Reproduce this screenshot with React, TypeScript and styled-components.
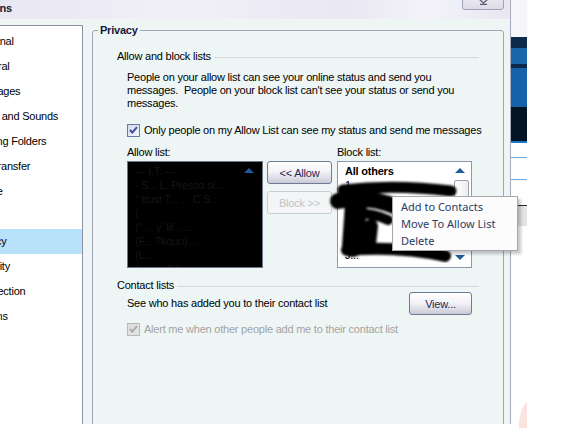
import React from 'react';
import styled, { createGlobalStyle } from 'styled-components';

const palette = {
  body: '#eef6f5',
  title: '#eae9f4',
  frame: '#a9a8bd',
  group: '#a4a4b6',
  rule: '#d4d9dc',
  select: '#b8e2f9',
  text: '#000000',
  disabled: '#a3a3a3',
  navy: '#1e2852',
  menuText: '#2c3b64',
  arrow: '#1f5c9c',
};

const GlobalStyle = createGlobalStyle`
  html, body {
    margin: 0;
    padding: 0;
    background: #ffffff;
  }
  body {
    font-family: "Liberation Sans", Arial, sans-serif;
    font-size: 11px;
    letter-spacing: -0.22px;
    color: ${palette.text};
  }
`;

const Screen = styled.div`
  position: relative;
  width: 566px;
  height: 428px;
  overflow: hidden;
  display: flex;
  align-items: flex-start;
  background: #ffffff;
`;

const Window = styled.div`
  flex-shrink: 0;
  box-sizing: border-box;
  margin-left: -40px;
  width: 551px;
  height: 424px;
  display: flex;
  flex-direction: column;
  overflow: hidden;
  background: ${palette.body};
  border-right: 1px solid ${palette.frame};
`;

const TitleBar = styled.div`
  height: 19px;
  flex-shrink: 0;
  display: flex;
  justify-content: space-between;
  align-items: flex-start;
  padding-left: 12px;
  background: linear-gradient(90deg, #e6e5f1 0%, #f1f0f8 40%, #e9e8f3 70%, #f3f3f9 85%, #e8e7f2 100%);
`;

const TitleText = styled.span`
  padding-top: 2px;
  line-height: 13px;
  font-weight: bold;
  color: #1a1a30;
`;

const CloseButton = styled.div`
  box-sizing: border-box;
  width: 42px;
  height: 22px;
  margin-top: -12px;
  margin-right: 6px;
  display: flex;
  align-items: flex-end;
  justify-content: center;
  padding-bottom: 4px;
  border: 1px solid #a3a3b7;
  border-radius: 3px;
  background: linear-gradient(#f7f7fb, #dcdbe8);
`;

const Body = styled.div`
  flex: 1;
  display: flex;
  align-items: flex-start;
  gap: 9px;
  padding: 6px 6px 0 6px;
  overflow: hidden;
`;

const Sidebar = styled.ul`
  box-sizing: border-box;
  flex-shrink: 0;
  width: 117px;
  height: 420px;
  margin: 0;
  padding: 3px 0 0 0;
  list-style: none;
  background: #ffffff;
  border: 1px solid #8f8fa2;
  overflow: hidden;
`;

const NavItem = styled.li<{ $selected?: boolean }>`
  height: 25px;
  line-height: 25px;
  padding-left: 5px;
  white-space: nowrap;
  background: ${(p) => (p.$selected ? palette.select : 'transparent')};
`;

const Group = styled.fieldset`
  box-sizing: border-box;
  flex-shrink: 0;
  width: 412px;
  height: 420px;
  margin: -1px 0 0 0;
  padding: 0 24px 0 24px;
  min-width: 0;
  border: 1px solid ${palette.group};
  border-radius: 3px;
`;

const Legend = styled.legend`
  margin-left: -19px;
  padding: 0 2px;
  line-height: 13px;
  font-weight: bold;
  color: #16163a;
`;

const SectionHeader = styled.div<{ $top: number }>`
  display: flex;
  align-items: center;
  gap: 3px;
  margin-top: ${(p) => p.$top}px;
  line-height: 13px;
  white-space: nowrap;
  &::after {
    content: '';
    flex: 1;
    height: 1px;
    margin-top: 1px;
    background: ${palette.rule};
  }
`;

const SectionBody = styled.div`
  padding: 0 7px 0 10px;
`;

const Paragraph = styled.p`
  margin: 8px 0 0 0;
  line-height: 13px;
  white-space: pre;
`;

const CheckRow = styled.label<{ $top: number; $disabled?: boolean }>`
  display: flex;
  align-items: center;
  gap: 4px;
  height: 13px;
  margin-top: ${(p) => p.$top}px;
  line-height: 13px;
  white-space: nowrap;
  color: ${(p) => (p.$disabled ? palette.disabled : palette.text)};
  svg {
    flex-shrink: 0;
  }
`;

const ListsRow = styled.div`
  display: flex;
  align-items: flex-start;
  margin-top: 9px;
`;

const ListColumn = styled.div`
  display: flex;
  flex-direction: column;
  gap: 2px;
  line-height: 13px;
`;

const ListBox = styled.div<{ $dark?: boolean; $width: number }>`
  position: relative;
  box-sizing: border-box;
  width: ${(p) => p.$width}px;
  height: 107px;
  padding: 2px 0 0 7px;
  overflow: hidden;
  background: ${(p) => (p.$dark ? '#000000' : '#ffffff')};
  border: 1px solid ${(p) => (p.$dark ? '#6f7688' : '#8d97ad')};
`;

const ListLine = styled.div<{ $bold?: boolean; $dim?: boolean }>`
  height: 14px;
  line-height: 14px;
  white-space: nowrap;
  font-weight: ${(p) => (p.$bold ? 'bold' : 'normal')};
  color: ${(p) => (p.$dim ? '#151515' : '#000000')};
`;

const ScrollArrow = styled.div<{ $down?: boolean; $dark?: boolean }>`
  position: absolute;
  right: ${(p) => (p.$dark ? 8 : 6)}px;
  ${(p) => (p.$down ? 'bottom: 7px;' : 'top: 6px;')}
  width: 0;
  height: 0;
  border-left: 5px solid transparent;
  border-right: 5px solid transparent;
  ${(p) => (p.$down ? `border-top: 5px solid ${palette.arrow};` : `border-bottom: 5px solid ${palette.arrow};`)}
`;

const ScrollThumb = styled.div`
  position: absolute;
  right: 2px;
  top: 18px;
  width: 15px;
  height: 24px;
  box-sizing: border-box;
  border: 1px solid #9aa0ae;
  border-radius: 2px;
  background: linear-gradient(90deg, #ffffff, #ececf0);
`;

const ButtonColumn = styled.div`
  display: flex;
  flex-direction: column;
  gap: 7px;
  margin: 15px 5px 0 4px;
`;

const Button = styled.button<{ $width: number }>`
  box-sizing: border-box;
  width: ${(p) => p.$width}px;
  height: 23px;
  padding: 0;
  font-family: "Liberation Sans", Arial, sans-serif;
  font-size: 11px;
  letter-spacing: -0.22px;
  color: ${palette.navy};
  border: 1px solid #6f7a99;
  border-radius: 3px;
  background: linear-gradient(#ffffff 0%, #f4f4f8 45%, #d9dae3 80%, #c8c9d4 100%);
  &:disabled {
    color: #c2c4cb;
    border-color: #cbcdd4;
    background: #f4f5f7;
  }
`;

const ContactRow = styled.div`
  display: flex;
  justify-content: space-between;
  align-items: center;
  height: 23px;
  line-height: 13px;
`;

const ContactText = styled.span`
  padding-bottom: 1px;
`;

const ContextMenu = styled.ul`
  position: absolute;
  left: 392px;
  top: 196px;
  box-sizing: border-box;
  width: 126px;
  margin: 0;
  padding: 1px 0;
  list-style: none;
  background: #fcfcfd;
  border: 1px solid #a7a7ab;
  box-shadow: 3px 3px 3px rgba(0, 0, 0, 0.22);
`;

const MenuItem = styled.li`
  height: 17px;
  line-height: 17px;
  padding-left: 8px;
  font-family: "Noto Sans", "Open Sans", sans-serif;
  font-size: 11px;
  letter-spacing: 0;
  color: ${palette.menuText};
  white-space: nowrap;
`;

const Backdrop = styled.svg`
  flex-shrink: 0;
  display: block;
`;

const Scribble = styled.svg`
  position: absolute;
  left: 0;
  top: 0;
  pointer-events: none;
`;

const CheckBox = ({ disabled }: { disabled?: boolean }) => (
  <svg width="13" height="13" viewBox="0 0 13 13">
    <defs>
      <linearGradient id={disabled ? 'cbd' : 'cb'} x1="0" y1="0" x2="1" y2="1">
        <stop offset="0" stopColor={disabled ? '#dcdcdc' : '#d3d8ea'} />
        <stop offset="1" stopColor={disabled ? '#e6e6e6' : '#f7f8fc'} />
      </linearGradient>
    </defs>
    <rect x="0.5" y="0.5" width="12" height="12" fill={`url(#${disabled ? 'cbd' : 'cb'})`} stroke={disabled ? '#b9b9b9' : '#6a7aa8'} />
    <path d="M3 6 L5.3 8.6 L10 3.2" fill="none" stroke={disabled ? '#a9a9a9' : '#3a4c9c'} strokeWidth="2" />
  </svg>
);

const navItems = [
  'Personal',
  'General',
  'Messages',
  'Alerts and Sounds',
  'Sharing Folders',
  'File Transfer',
  'Phone',
  'Tabs',
  'Privacy',
  'Security',
  'Connection',
  'Add-ins',
];

const allowed = [
  '--- I.T. --- ',
  '- S...  L.  Presso sl...',
  '" trust T... . . C S...',
  '(',
  '(" ...  y\' lil...  ...',
  '(F... ?kquo) ...',
  '(L...',
  '(... ... ..BS... . ...',
];

const blocked = ['1.', 'G...  ..', 'B...', 'C...  ...', 'N...', 'J...', 'g... ... ...'];

export default function App() {
  return (
    <>
      <GlobalStyle />
      <Screen>
        <Window>
          <TitleBar>
            <TitleText>Options</TitleText>
            <CloseButton>
              <svg width="11" height="6" viewBox="0 0 11 6">
                <path d="M1 0 L5.5 4 L10 0 M2 5.5 L9 5.5" fill="none" stroke="#5a5a70" strokeWidth="1.3" />
              </svg>
            </CloseButton>
          </TitleBar>
          <Body>
            <Sidebar>
              {navItems.map((item) => (
                <NavItem key={item} $selected={item === 'Privacy'}>
                  {item}
                </NavItem>
              ))}
            </Sidebar>
            <Group>
              <Legend>Privacy</Legend>
              <SectionHeader $top={13}>Allow and block lists</SectionHeader>
              <SectionBody>
                <Paragraph>
                  {'People on your allow list can see your online status and send you\nmessages.  People on your block list can\'t see your status or send you\nmessages.'}
                </Paragraph>
                <CheckRow $top={14}>
                  <CheckBox />
                  Only people on my Allow List can see my status and send me messages
                </CheckRow>
                <ListsRow>
                  <ListColumn>
                    <span>Allow list:</span>
                    <ListBox $dark $width={136}>
                      {allowed.map((line, i) => (
                        <ListLine key={i} $dim>
                          {line}
                        </ListLine>
                      ))}
                      <ScrollArrow $dark />
                    </ListBox>
                  </ListColumn>
                  <ButtonColumn>
                    <Button $width={65}>&lt;&lt; Allow</Button>
                    <Button $width={65} disabled>
                      Block &gt;&gt;
                    </Button>
                  </ButtonColumn>
                  <ListColumn>
                    <span>Block list:</span>
                    <ListBox $width={135}>
                      <ListLine $bold>All others</ListLine>
                      {blocked.map((line, i) => (
                        <ListLine key={i}>{line}</ListLine>
                      ))}
                      <ScrollArrow />
                      <ScrollThumb />
                      <ScrollArrow $down />
                    </ListBox>
                  </ListColumn>
                </ListsRow>
              </SectionBody>
              <SectionHeader $top={11}>Contact lists</SectionHeader>
              <SectionBody>
                <ContactRow>
                  <ContactText>See who has added you to their contact list</ContactText>
                  <Button $width={63}>View...</Button>
                </ContactRow>
                <CheckRow $top={8} $disabled>
                  <CheckBox disabled />
                  Alert me when other people add me to their contact list
                </CheckRow>
              </SectionBody>
            </Group>
          </Body>
        </Window>
        <Backdrop width="16" height="428" viewBox="0 0 16 428">
          <rect x="0" y="0" width="16" height="37" fill="#f6f6f9" />
          <rect x="0" y="37" width="16" height="31" fill="#0d2a4a" />
          <rect x="0" y="48" width="16" height="16" fill="#1b66ad" />
          <rect x="0" y="68" width="16" height="39" fill="#1662aa" />
          <rect x="0" y="107" width="16" height="34" fill="#031425" />
          <rect x="0" y="141" width="16" height="2" fill="#1b78c4" />
          <rect x="0" y="143" width="16" height="62" fill="#ffffff" />
          <rect x="0" y="157" width="16" height="1" fill="#6ea8e0" />
          <rect x="0" y="179" width="16" height="1" fill="#6ea8e0" />
          <rect x="0" y="205" width="16" height="1" fill="#2a2a2a" />
          <rect x="0" y="206" width="16" height="20" fill="#e4e4e6" />
          <rect x="0" y="226" width="16" height="202" fill="#ffffff" />
          <ellipse cx="18" cy="428" rx="10" ry="26" fill="#fbe3e0" />
        </Backdrop>
        <Scribble width="566" height="428" viewBox="0 0 566 428">
          <defs>
            <filter id="brush" x="-10%" y="-10%" width="120%" height="120%">
              <feGaussianBlur stdDeviation="0.9" />
            </filter>
          </defs>
          <g fill="none" stroke="#000" strokeLinecap="round" strokeLinejoin="round" filter="url(#brush)">
            <path d="M343 190 Q 395 184 451 191" strokeWidth="11" />
            <path d="M338 201 Q 368 195 397 207" strokeWidth="16" />
            <path d="M352 214 Q 370 212 388 220" strokeWidth="10" />
            <path d="M356 205 L 353 246" strokeWidth="22" />
            <path d="M371 226 L 369 244" strokeWidth="14" />
            <path d="M347 250 Q 400 246 445 256" strokeWidth="12" />
          </g>
        </Scribble>
        <ContextMenu>
          <MenuItem>Add to Contacts</MenuItem>
          <MenuItem>Move To Allow List</MenuItem>
          <MenuItem>Delete</MenuItem>
        </ContextMenu>
      </Screen>
    </>
  );
}
